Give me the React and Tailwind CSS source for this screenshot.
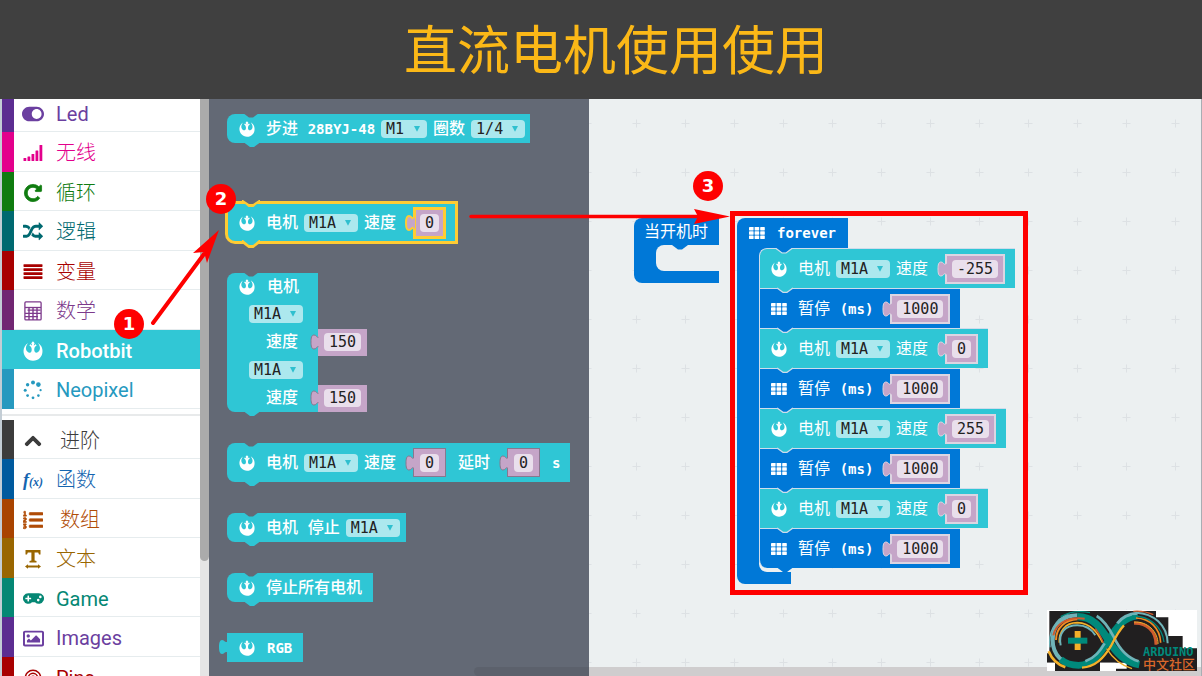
import React from "react";
import {
  FaToggleOn,
  FaRebel,
  FaChevronUp,
  FaListOl,
  FaGamepad,
  FaRegImage,
} from "react-icons/fa";

/* ---------- icons ---------- */

const SignalIcon = () => (
  <svg viewBox="0 0 20 18" className="h-[18px] w-5" fill="currentColor">
    <rect x="0.5" y="14" width="2.8" height="3" rx=".5" />
    <rect x="4.5" y="12.5" width="2.8" height="4.5" rx=".5" />
    <rect x="8.5" y="10" width="2.8" height="7" rx=".5" />
    <rect x="12.5" y="6.5" width="2.8" height="10.5" rx=".5" />
    <rect x="16.5" y="1" width="2.8" height="16" rx=".5" />
  </svg>
);

const RepeatIcon = () => (
  <svg viewBox="0 0 1792 1792" className="size-5" fill="currentColor" stroke="currentColor" strokeWidth="70">
    <path d="M1664 256v448q0 26-19 45t-45 19h-448q-42 0-59-40-17-39 14-69l138-138q-148-137-349-137-104 0-198.5 40.5t-163.5 109.5-109.5 163.5-40.5 198.5 40.5 198.5 109.5 163.5 163.5 109.5 198.5 40.5q119 0 225-52t179-147q7-10 23-12 15 0 25 9l137 138q9 8 9.5 20.5t-7.5 22.5q-109 132-264 204.5t-327 72.5q-156 0-298-61t-245-164-164-245-61-298 61-298 164-245 245-164 298-61q147 0 284.5 55.5t244.5 156.5l130-129q29-31 70-14 39 17 39 59z" />
  </svg>
);

const ShuffleIcon = () => (
  <svg viewBox="0 0 1792 1792" className="size-5" fill="currentColor">
    <path d="M666 481q-60 92-137 273-22-45-37-72.500t-40.500-63.500-51-56.500-63-35-81.500-14.500h-224q-14 0-23-9t-9-23v-192q0-14 9-23t23-9h224q250 0 410 225zm1126 799q0 14-9 23l-320 320q-9 9-23 9-13 0-22.500-9.500t-9.500-22.500v-192q-32 0-85 .5t-81 1-73-1-71-5-64-10.500-63-18.500-58-28.500-59-40-55-53.500-56-69.500q59-93 136-273 22 45 37 72.500t40.500 63.500 51 56.500 63 35 81.500 14.500h256v-192q0-14 9-23t23-9q12 0 24 10l319 319q9 9 9 23zm0-896q0 14-9 23l-320 320q-9 9-23 9-13 0-22.500-9.500t-9.500-22.500v-192h-256q-48 0-87 15t-69 45-51 61.500-45 77.500q-32 62-78 171-29 66-49.500 111t-54 105-64 100-74 83-90 68.500-106.500 42-128 16.500h-224q-14 0-23-9t-9-23v-192q0-14 9-23t23-9h224q48 0 87-15t69-45 51-61.500 45-77.500q32-62 78-171 29-66 49.500-111t54-105 64-100 74-83 90-68.500 106.500-42 128-16.500h256v-192q0-14 9-23t23-9q12 0 24 10l319 319q9 9 9 23z" />
  </svg>
);

const LinesIcon = () => (
  <svg viewBox="0 0 20 18" className="h-[18px] w-5" fill="currentColor">
    {[1.2, 5.2, 9.2, 13.2].map((y) => (
      <rect key={y} x="0.5" y={y} width="19" height="2.7" rx=".6" />
    ))}
  </svg>
);

const CalculatorIcon = () => (
  <svg viewBox="0 0 18 20" className="h-5 w-[18px]" fill="none" stroke="currentColor">
    <rect x="0.9" y="0.9" width="16.2" height="18" rx="1" strokeWidth="1.3" />
    <path d="M1 6.5h16" strokeWidth="1.3" />
    <path d="M3.500 9.200h13M1 12.400h16M1 15.600h13" strokeWidth="1.300" />
    <path d="M5 6.500v12.500M9 6.500v12.500M13 6.500v12.500" strokeWidth="1.400" />
  </svg>
);

const SpinnerIcon = () => (
  <svg viewBox="0 0 20 20" className="size-5" fill="currentColor">
    <circle cx="10" cy="2.600" r="2" />
    <circle cx="15.400" cy="4.600" r="2.300" />
    <circle cx="17.600" cy="10.200" r="1.100" />
    <circle cx="15.400" cy="15.600" r="1.300" />
    <circle cx="10" cy="17.800" r="1.400" />
    <circle cx="4.600" cy="15.600" r="1.400" />
    <circle cx="2.200" cy="10.200" r="1.500" />
    <circle cx="4.600" cy="4.800" r="1.700" />
  </svg>
);

const FunctionIcon = () => (
  <span className="font-['Liberation_Serif',serif] text-lg leading-none font-bold italic">
    f<span className="text-xs">(x)</span>
  </span>
);

const TextWidthIcon = () => (
  <svg viewBox="0 0 18 20" className="h-5 w-[18px]" fill="currentColor">
    <path d="M1.500 1h15v4.600h-1.500l-.8-2.200h-3.600v8.200l1.900.5v1.400h-7v-1.400l1.900-.5V3.400H3.800L3 5.600H1.500z" />
    <path d="M4 15.200v1.400h10v-1.400l3 2.300-3 2.300v-1.400H4v1.400l-3-2.300z" />
  </svg>
);

const TargetIcon = () => (
  <svg viewBox="0 0 20 20" className="size-5" fill="none" stroke="currentColor" strokeWidth="1.500">
    <circle cx="10" cy="10" r="7.700" />
    <circle cx="10" cy="10" r="4.700" />
    <circle cx="10" cy="10" r="1.800" />
  </svg>
);

const GridIcon = () => (
  <svg viewBox="0 0 16 12" className="h-3 w-4 shrink-0" fill="white">
    {[0, 4.3, 8.6].map((y) =>
      [0, 5.6, 11.2].map((x) => (
        <rect key={x + "-" + y} x={x} y={y} width="4.6" height="3.4" rx=".4" />
      ))
    )}
  </svg>
);

const RebelIcon = () => <FaRebel className="size-4 shrink-0 text-white" />;

/* ---------- toolbox ---------- */

const basic = [
  { name: "Led", bar: "bg-[#5c2d91]", text: "text-[#6b3fa0]", icon: <FaToggleOn size={22} /> },
  { name: "无线", bar: "bg-[#e3008c]", text: "text-[#e3008c]", icon: <SignalIcon /> },
  { name: "循环", bar: "bg-[#107c10]", text: "text-[#107c10]", icon: <RepeatIcon /> },
  { name: "逻辑", bar: "bg-[#006970]", text: "text-[#006970]", icon: <ShuffleIcon /> },
  { name: "变量", bar: "bg-[#a80000]", text: "text-[#a80000]", icon: <LinesIcon /> },
  { name: "数学", bar: "bg-[#712672]", text: "text-[#7d3a8c]", icon: <CalculatorIcon /> },
  { name: "Robotbit", active: true, bar: "bg-[#31c7d5]", text: "text-white font-medium", icon: <FaRebel size={20} /> },
  { name: "Neopixel", bar: "bg-[#2699bf]", text: "text-[#2699bf]", icon: <SpinnerIcon /> },
];

const advanced = [
  { name: "进阶", indent: true, bar: "bg-[#3c3c3c]", text: "text-[#3c3c3c]", icon: <FaChevronUp size={18} stroke="currentColor" strokeWidth={30} /> },
  { name: "函数", bar: "bg-[#005a9e]", text: "text-[#1565b0]", icon: <FunctionIcon /> },
  { name: "数组", indent: true, bar: "bg-[#a94400]", text: "text-[#b04c06]", icon: <FaListOl size={20} stroke="currentColor" strokeWidth={16} /> },
  { name: "文本", bar: "bg-[#996600]", text: "text-[#996600]", icon: <TextWidthIcon /> },
  { name: "Game", bar: "bg-[#058774]", text: "text-[#058774]", icon: <FaGamepad size={21} /> },
  { name: "Images", bar: "bg-[#5c2d91]", text: "text-[#6b3fa0]", icon: <FaRegImage size={21} /> },
  { name: "Pins", bar: "bg-[#a80000]", text: "text-[#a80000]", icon: <TargetIcon /> },
];

const isLatin = (name) => /^[A-Z]/.test(name);

function Category({ item }) {
  return (
    <li className="flex odd:h-[39px] even:h-10">
      <button
        type="button"
        className={`flex w-full items-stretch text-left text-xl ${item.text} ${item.active ? "bg-[#31c7d5]" : "bg-white"}`}
      >
        <span className={`w-3 ${item.bar}`} />
        <span className={`flex flex-1 items-center gap-3 border-b pt-[3px] pl-2 ${item.active ? "border-[#31c7d5]" : "border-[#e6ecee]"}`}>
          <span className="flex w-[22px] items-center justify-center">{item.icon}</span>
          <span className={`${item.indent ? "pl-1" : ""} ${isLatin(item.name) ? "" : "font-light"}`}>{item.name}</span>
        </span>
      </button>
    </li>
  );
}

/* ---------- block parts ---------- */

function Label({ children, light }) {
  return (
    <span className={`shrink-0 whitespace-pre text-white ${light ? "font-normal" : "font-medium"}`}>
      {children}
    </span>
  );
}

const Mono = ({ children }) => <span className="text-sm leading-none font-bold">{children}</span>;

function Dropdown({ value, narrow }) {
  return (
    <span className="relative flex shrink-0">
      <select
        aria-label={value}
        defaultValue={value}
        className={`h-[18px] appearance-none rounded bg-[#ace8ee] pl-[5px] text-[15px] leading-[18px] text-[#222] ${narrow ? "w-[46px]" : "w-[54px]"}`}
      >
        <option>{value}</option>
      </select>
      <svg viewBox="0 0 6 6" className="pointer-events-none absolute top-[6px] right-[7px] size-[6px]">
        <path d="M0 0h6L3 5.800z" fill="#2fc0cf" />
      </svg>
    </span>
  );
}

const edges = {
  grey: { border: "border border-[#87788f]", line: "#87788f" },
  plain: { border: "border border-[#c5a5c8]", line: "#87788f" },
  light: { border: "border-2 border-[#dcd5e2]", line: "#dcd5e2" },
  gold: { border: "border-[3px] border-[#fc3]", line: "#fc3" },
};

function Value({ value, edge, name }) {
  const width = { 1: "w-[19px]", 3: "w-[37px]", 4: "w-[46px]" }[value.length];
  const e = edges[edge];
  return (
    <span className="ml-[3px] flex shrink-0 items-center">
      <svg viewBox="0 0 10 16" className="z-10 -mr-[2px] h-4 w-[10px]">
        <path
          d="M10 2.500C7 4.500 6.500 1 4 1C1.500 1 1 4 1 8S1.500 15 4 15C6.500 15 7 11.500 10 13.500z"
          fill="#c5a5c8"
        />
        <path
          d="M8.500 3.300C6.500 3.800 6.500 1 4 1C1.500 1 1 4 1 8S1.500 15 4 15C6.500 15 6.500 12.200 8.500 12.700"
          fill="none"
          stroke={e.line}
          strokeWidth={edge === "gold" ? 2 : 1}
        />
      </svg>
      <span className={`flex items-center justify-center bg-[#c5a5c8] ${e.border} ${edge === "gold" ? "h-8 px-1" : edge === "light" ? "h-[30px] px-[5px]" : edge === "plain" ? "h-[27px] px-[5px]" : "h-[29px] px-[6px]"}`}>
        <input
          aria-label={name}
          defaultValue={value}
          className={`h-[18px] rounded bg-[#e9dfec] text-center text-[15px] leading-[18px] text-[#222] ${width}`}
        />
      </span>
    </span>
  );
}

const Notch = ({ className }) => (
  <svg viewBox="0 0 16 5" className={`absolute -top-px left-4 h-[5px] w-4 ${className}`}>
    <path d="M0 0L6 4.500H10L16 0z" fill="currentColor" />
  </svg>
);

const Bump = ({ color, line }) => (
  <svg viewBox="0 0 18 6" className="absolute top-full left-4 z-10 -mt-px h-[6px] w-[18px]">
    <path d="M0 0V.5H1L7 5H11L17 .5V0z" fill={color} />
    {line && <path d="M1 1L7 5.300H11L17 1" fill="none" stroke={line} strokeWidth="1.200" />}
  </svg>
);

function FlyoutBlock({ children, height = "h-[29px]", className = "" }) {
  return (
    <div className={`relative flex w-max items-center gap-[6px] rounded-l-lg bg-[#2fc6d5] pl-3 ${height} ${className}`}>
      <Notch className="text-[#636975]" />
      {children}
      <Bump color="#2fc6d5" />
    </div>
  );
}

const Lead = ({ children }) => <span className="mr-[5px] flex shrink-0">{children}</span>;

function Flyout() {
  return (
    <section
      aria-label="Robotbit"
      className="relative flex w-[380px] shrink-0 flex-col gap-[31px] bg-[#636975] pt-[15px] pl-[18px] leading-none"
    >
      <FlyoutBlock className="mb-[29px] pr-[5px]">
        <Lead><RebelIcon /></Lead>
        <Label>步进 <Mono>28BYJ-48</Mono></Label>
        <Dropdown value="M1" narrow />
        <Label>圈数</Label>
        <Dropdown value="1/4" />
      </FlyoutBlock>

      <div className="relative flex h-[39px] w-max items-center gap-[6px] rounded-l-lg bg-[#2fc6d5] pr-[10px] pl-3 outline-3 -outline-offset-1 outline-[#fc3]">
        <svg viewBox="0 0 18 8" className="absolute -top-[3px] left-[15px] h-2 w-[18px]">
          <path d="M0 0V1.200L6.500 7H11.500L18 1.200V0z" fill="#fc3" />
          <path d="M1 0L7 4H11L17 0z" fill="#636975" />
        </svg>
        <Lead><RebelIcon /></Lead>
        <Label>电机</Label>
        <Dropdown value="M1A" />
        <Label>速度</Label>
        <Value value="0" edge="gold" name="速度" />
        <svg viewBox="0 0 18 8" className="absolute -bottom-[6px] left-[15px] h-2 w-[18px]">
          <path d="M0 3L6.500 8H11.500L18 3V0H0z" fill="#fc3" />
          <path d="M1 0L7 5H11L17 0z" fill="#2fc6d5" />
        </svg>
      </div>

      <div className="relative flex w-[91px] flex-col rounded-l-lg bg-[#2fc6d5]">
        <Notch className="text-[#636975]" />
        <div className="flex h-[27px] items-center gap-3 pl-3">
          <RebelIcon />
          <Label>电机</Label>
        </div>
        {["速度 1", "速度 2"].map((name) => (
          <React.Fragment key={name}>
            <div className="flex h-7 items-center pl-[22px]">
              <Dropdown value="M1A" />
            </div>
            <div className="flex h-7 items-center gap-[9px] pl-[39px]">
              <Label>速度</Label>
              <Value value="150" edge="plain" name={name} />
            </div>
          </React.Fragment>
        ))}
        <Bump color="#2fc6d5" />
      </div>

      <FlyoutBlock height="h-[39px]" className="pr-[10px]">
        <Lead><RebelIcon /></Lead>
        <Label>电机</Label>
        <Dropdown value="M1A" />
        <Label>速度</Label>
        <Value value="0" edge="grey" name="速度" />
        <span className="w-0" />
        <Label>延时</Label>
        <Value value="0" edge="grey" name="延时" />
        <span className="w-0" />
        <Label><Mono>s</Mono></Label>
      </FlyoutBlock>

      <FlyoutBlock className="pr-[6px]">
        <Lead><RebelIcon /></Lead>
        <Label>电机 停止</Label>
        <Dropdown value="M1A" />
      </FlyoutBlock>

      <FlyoutBlock className="pr-[11px]">
        <Lead><RebelIcon /></Lead>
        <Label>停止所有电机</Label>
      </FlyoutBlock>

      <div className="relative flex h-[29px] w-max items-center gap-3 bg-[#2fc6d5] pr-[11px] pl-3">
        <svg viewBox="0 0 9 16" className="absolute top-[6px] -left-2 h-4 w-[9px]">
          <path d="M9 2.500C6 4.500 5.500 1 3 1C.8 1 0 4 0 8S.8 15 3 15C5.500 15 6 11.500 9 13.500z" fill="#2fc6d5" />
        </svg>
        <RebelIcon />
        <Label><Mono>RGB</Mono></Label>
      </div>
      <span className="absolute right-0 bottom-0 h-[9px] w-[115px] rounded-l-full bg-[#5c616c]" />
    </section>
  );
}

/* ---------- workspace ---------- */

const program = ["-255", "0", "255", "0"];

function StackBlock({ color, fill, first, last, children }) {
  return (
    <div
      className={`relative flex h-10 w-max items-center gap-[6px] border-t border-l border-[#cfdcec] pr-[10px] pl-[11px] ${color} ${first ? "rounded-tl-lg" : ""} ${last ? "rounded-bl-lg" : ""}`}
    >
      {children}
      <Bump color={fill} line={last ? undefined : "#cfdcec"} />
    </div>
  );
}

function OnStart() {
  return (
    <div className="absolute top-[119px] left-[45px] w-[85px] rounded-l-lg bg-[#0078d7] pb-3">
      <div className="flex h-[27px] items-center pl-[10px]">
        <Label light>当开机时</Label>
      </div>
      <div className="relative ml-[22px] h-[26px] rounded-l-lg bg-[#ecf0f1]">
        <svg viewBox="0 0 16 5" className="absolute top-0 left-4 h-[5px] w-4">
          <path d="M0 0L6 4.500H10L16 0z" fill="#0078d7" />
        </svg>
      </div>
    </div>
  );
}

function Forever() {
  return (
    <div className="absolute top-[119px] left-[148px]">
      <div className="flex h-[30px] w-[111px] items-center gap-3 rounded-tl-lg bg-[#0078d7] pl-3">
        <GridIcon />
        <Label><Mono>forever</Mono></Label>
      </div>
      <div className="flex">
        <div className="w-8 shrink-0 bg-[#0078d7]" />
        <div className="relative -ml-[10px] pb-1">
          <span className="absolute bottom-0 left-0 h-5 w-8 rounded-bl-lg bg-[#ecf0f1]" />
          <svg viewBox="0 0 18 6" className="absolute top-0 left-4 z-10 h-[6px] w-[18px]">
            <path d="M1 0L7 4.500H11L17 0z" fill="#0078d7" />
            <path d="M1 .5L7 5H11L17 .5" fill="none" stroke="#cfdcec" strokeWidth="1.200" />
          </svg>
          {program.map((speed, i) => (
            <React.Fragment key={i}>
              <StackBlock color="bg-[#2fc6d5]" fill="#2fc6d5" first={i === 0}>
                <Lead><RebelIcon /></Lead>
                <Label light>电机</Label>
                <Dropdown value="M1A" />
                <Label light>速度</Label>
                <Value value={speed} edge="light" name="速度" />
              </StackBlock>
              <StackBlock color="bg-[#0078d7]" fill="#0078d7" last={i === program.length - 1}>
                <Lead><GridIcon /></Lead>
                <Label light>暂停 <Mono>(ms)</Mono></Label>
                <Value value="1000" edge="light" name="暂停 (ms)" />
              </StackBlock>
            </React.Fragment>
          ))}
        </div>
      </div>
      <div className="h-3 w-[54px] rounded-bl-lg bg-[#0078d7]" />
    </div>
  );
}

function ArduinoLogo() {
  return (
    <div className="absolute right-[5px] bottom-[5px] h-[61px] w-[150px] bg-white">
      <svg viewBox="51 60 450 183" className="absolute inset-0 size-full" fill="none">
        <path
          d="M58 63H378V82H415V138H458V175H501V243H258V236H290V218H210V243H75V218H51V190H58z"
          fill="#211f20"
        />
        <path d="M210 218h47v25h-47zM51 218h24v25h-24z" fill="#fff" />
        {/* main ribbon */}
        <path
          d="M142 76C98 76 68 106 68 150S98 226 146 226C190 226 214 188 236 152C258 114 280 80 322 76"
          stroke="#6fb3b8" strokeWidth="12"
        />
        <path
          d="M142 80C190 80 212 112 236 152C260 192 286 216 328 224"
          stroke="#00897b" strokeWidth="22"
        />
        <path
          d="M92 208C106 220 126 226 146 226C190 224 212 190 236 150C256 112 284 82 322 78"
          stroke="#00897b" strokeWidth="20"
        />
        <path d="M200 78C222 90 238 116 252 142C268 176 294 204 326 214" stroke="#6fb3b8" strokeWidth="8" />
        <path d="M166 214C196 202 210 184 224 160" stroke="#6fb3b8" strokeWidth="8" />
        <path d="M262 100C276 82 296 72 322 70" stroke="#6fb3b8" strokeWidth="9" />
        {/* coloured strands */}
        <path d="M78 150C78 112 106 90 142 88" stroke="#f08a24" strokeWidth="6" />
        <path d="M70 136C76 106 104 80 164 86" stroke="#cf5b2e" strokeWidth="6" />
        <path d="M88 158C86 126 104 98 142 98C184 100 204 130 218 158" stroke="#f4b02a" strokeWidth="5" />
        <path d="M92 166C84 128 106 106 142 106C170 106 186 120 196 136" stroke="#6fb3b8" strokeWidth="6" />
        <path d="M196 116C208 130 214 144 220 158" stroke="#cf5b2e" strokeWidth="4" />
        <path d="M56 184C64 204 76 222 106 232" stroke="#f4b02a" strokeWidth="8" />
        <path d="M60 172C54 130 72 88 118 70" stroke="#6fb3b8" strokeWidth="4" />
        <path d="M92 80C120 64 152 62 180 68" stroke="#00897b" strokeWidth="4" />
        <path d="M156 233C196 230 220 206 244 166C256 142 266 122 282 106" stroke="#f4b02a" strokeWidth="7" />
        <path d="M230 176C246 202 266 224 306 236" stroke="#f4b02a" strokeWidth="4" />
        <path d="M318 68C370 70 412 104 413 160" stroke="#6fb3b8" strokeWidth="6" />
        <path d="M310 64C332 62 352 66 370 74" stroke="#cf5b2e" strokeWidth="4" />
        <path d="M306 78C356 76 396 108 402 156" stroke="#00897b" strokeWidth="4" />
        <path d="M318 84C360 86 390 114 392 158" stroke="#f08a24" strokeWidth="5" />
        <path d="M312 100C348 98 378 122 378 164" stroke="#cf5b2e" strokeWidth="9" />
        <path d="M312 96C352 94 384 124 384 162" stroke="#f4b02a" strokeWidth="3" />
        {/* plus sign */}
        <path d="M143 123V180" stroke="#f4b02a" strokeWidth="18" />
        <path d="M114 152H172" stroke="#00897b" strokeWidth="18" />
      </svg>
      <div className="absolute right-0 -bottom-px flex w-[54px] flex-col items-start font-['DejaVu_Sans_Mono','Noto_Sans_CJK_SC',monospace] leading-none">
        <span className="text-xs leading-[12px] font-bold text-[#00897b]">ARDUINO</span>
        <span className="text-[13px] leading-[14px] font-medium text-[#d9682b]">中文社区</span>
      </div>
    </div>
  );
}

function Workspace() {
  return (
    <section aria-label="工作区" className="relative flex-1 overflow-hidden bg-[#ecf0f1] leading-none">
      <svg className="absolute inset-0 size-full">
        <defs>
          <pattern id="cross" x="23" y="0" width="49" height="49" patternUnits="userSpaceOnUse">
            <path d="M20.500 24.500h8M24.500 20.500v8" stroke="#dde1e4" />
          </pattern>
        </defs>
        <rect width="100%" height="100%" fill="url(#cross)" />
      </svg>
      <OnStart />
      <Forever />
      <div className="absolute inset-x-0 bottom-0 h-[9px] bg-[#cfcdce]" />
      <div className="absolute inset-y-0 right-0 w-px bg-[#a9adb3]" />
      <ArduinoLogo />
    </section>
  );
}

/* ---------- annotations ---------- */

function Marker({ n, place }) {
  return (
    <span
      className={`absolute flex size-[30px] items-center justify-center rounded-full bg-[#fe0000] font-['DejaVu_Sans',sans-serif] text-lg leading-none font-bold text-white ${place}`}
    >
      {n}
    </span>
  );
}

function Annotations() {
  return (
    <div className="pointer-events-none absolute inset-0 z-20">
      <div className="absolute top-[112px] left-[730px] h-[384px] w-[298px] border-5 border-[#fe0000]" />
      <svg viewBox="0 0 70 98" className="absolute top-[130px] left-[150px] h-[98px] w-[70px]">
        <path d="M3 94L54 25" stroke="#fe0000" strokeWidth="4" strokeLinecap="round" />
        <path d="M69 1L43 24L54 23L57 34z" fill="#fe0000" />
      </svg>
      <svg viewBox="0 0 262 18" className="absolute top-[109px] left-[469px] h-[18px] w-[262px]">
        <path d="M2 8.500H232" stroke="#fe0000" strokeWidth="3.500" strokeLinecap="round" />
        <path d="M261 8.500L225 1L229 8.500L225 16z" fill="#fe0000" />
      </svg>
      <Marker n="1" place="top-[210px] left-[114px]" />
      <Marker n="2" place="top-[85px] left-[206px]" />
      <Marker n="3" place="top-[72px] left-[693px]" />
    </div>
  );
}

export default function App() {
  return (
    <div className="flex h-screen flex-col overflow-hidden bg-[#ecf0f1] font-['DejaVu_Sans_Mono','Noto_Sans_CJK_SC',monospace] text-base">
      <header className="flex h-[99px] shrink-0 items-center justify-center bg-[#404040] pb-1 pl-[30px]">
        <h1 className="font-['Noto_Sans_CJK_SC',sans-serif] text-[53px] leading-none font-normal text-[#fbb817]">
          直流电机使用使用
        </h1>
      </header>
      <main className="relative flex min-h-0 flex-1">
        <nav
          aria-label="工具箱"
          className="w-[200px] shrink-0 overflow-hidden border-l-2 border-[#c3cdd5] bg-white font-['Roboto','Noto_Sans_CJK_SC',sans-serif]"
        >
          <ul className="-mt-[6px]">
            {basic.map((item) => <Category key={item.name} item={item} />)}
          </ul>
          <hr className="mt-[5px] mb-1 border-t-2 border-[#e8eaeb]" />
          <ul>
            {advanced.map((item) => <Category key={item.name} item={item} />)}
          </ul>
        </nav>
        <div className="w-[9px] shrink-0 bg-[#e5e5e5]">
          <div className="h-4/5 rounded-b-full bg-[#ababab]" />
        </div>
        <Flyout />
        <Workspace />
        <Annotations />
      </main>
    </div>
  );
}
